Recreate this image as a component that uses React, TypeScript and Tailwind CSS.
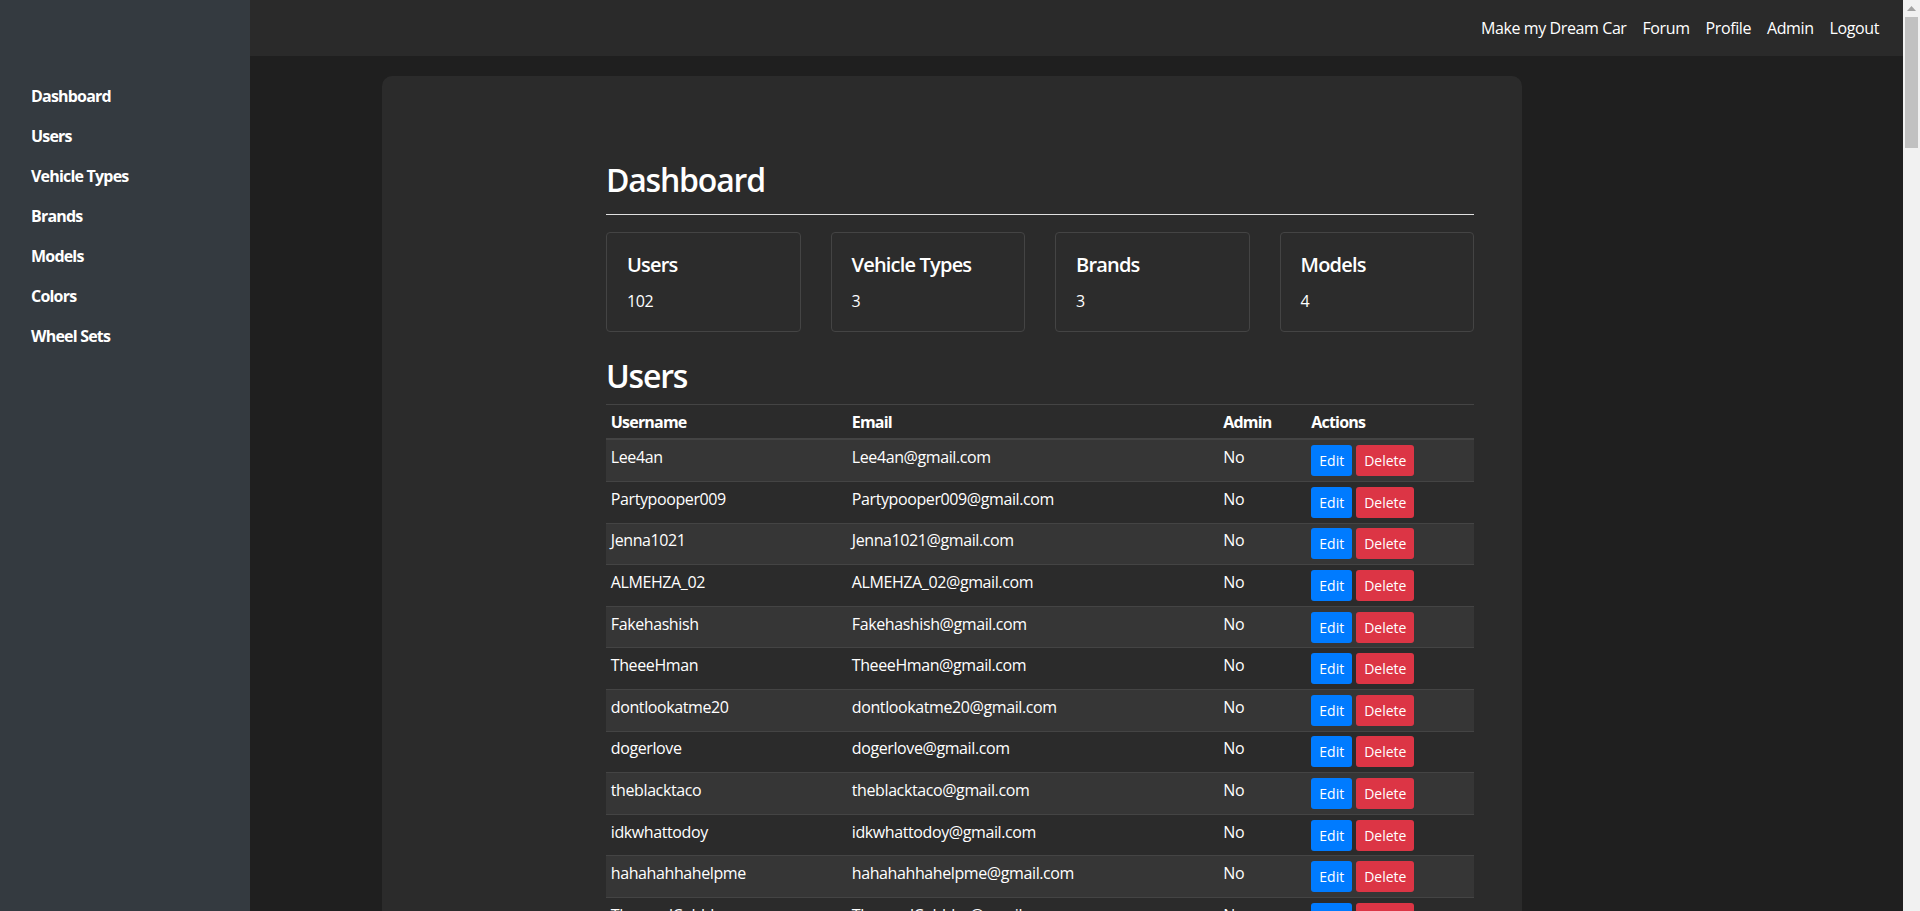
const named = [
    "Lee4an",
    "Partypooper009",
    "Jenna1021",
    "ALMEHZA_02",
    "Fakehashish",
    "TheeeHman",
    "dontlookatme20",
    "dogerlove",
    "theblacktaco",
    "idkwhattodoy",
    "hahahahhahelpme",
    "ThuggedCobbler",
];

const users = [...named, ...Array.from({length: 8}, (_, i) => `driver${i + 13}`)];

const stats = [
    {title: "Users", value: "102"},
    {title: "Vehicle Types", value: "3"},
    {title: "Brands", value: "3"},
    {title: "Models", value: "4"},
];

const sideLinks = ["Dashboard", "Users", "Vehicle Types", "Brands", "Models", "Colors", "Wheel Sets"];
const navLinks = ["Make my Dream Car", "Forum", "Profile", "Admin", "Logout"];

const App = () => {
    return (
        <div className="flex bg-[#1f1f1f] text-white tracking-[-0.4px] font-['Segoe_UI','Open_Sans',sans-serif]">
            <div className="flex flex-1 min-w-0">
                <aside className="sticky top-0 h-screen w-[250px] shrink-0 bg-[#343a40] pt-[76px]">
                    <ul className="flex flex-col">
                        {sideLinks.map((l) => (
                            <li key={l}>
                                <a className="block pl-[31px] py-2 text-base leading-6 font-bold tracking-[-0.8px]">{l}</a>
                            </li>
                        ))}
                    </ul>
                </aside>
                <div className="flex-1 flex flex-col">
                    <nav className="h-14 bg-[#2a2a2a] flex items-center justify-end pr-4">
                        <ul className="flex">
                            {navLinks.map((l) => (
                                <li key={l}>
                                    <a className="block px-2 py-2 text-base leading-6">{l}</a>
                                </li>
                            ))}
                        </ul>
                    </nav>
                    <main className="pt-5 pb-10">
                        <div className="ml-[132px] w-[1140px] rounded-[10px] bg-[#2b2b2b] pt-[85px] pl-[224px] pr-12 pb-12">
                            <h2 className="text-[32px] leading-[1.2] font-semibold tracking-[-1.2px]">Dashboard</h2>
                            <div className="mt-[15px] border-t border-[#e0e0e0]"></div>
                            <div className="mt-[17px] grid grid-cols-4 gap-[30px]">
                                {stats.map((s) => (
                                    <div key={s.title} className="h-[100px] rounded border border-[#444] bg-[#2c2c2c] p-5">
                                        <h5 className="text-xl leading-[1.2] font-semibold tracking-[-0.8px] mb-3">{s.title}</h5>
                                        <p className="text-base leading-6">{s.value}</p>
                                    </div>
                                ))}
                            </div>
                            <h2 className="mt-[25px] mb-2 text-[32px] leading-[1.2] font-semibold tracking-[-1.2px]">Users</h2>
                            <table className="w-full table-fixed border-collapse text-base leading-6">
                                <thead>
                                    <tr className="border-t border-[#444] border-b-2 border-b-[#444] tracking-[-0.8px]">
                                        <th className="w-[241px] p-[4.8px] text-left font-bold">Username</th>
                                        <th className="w-[371.5px] p-[4.8px] text-left font-bold">Email</th>
                                        <th className="w-[88px] p-[4.8px] text-left font-bold">Admin</th>
                                        <th className="p-[4.8px] text-left font-bold">Actions</th>
                                    </tr>
                                </thead>
                                <tbody>
                                    {users.map((u, i) => (
                                        <tr key={u} className={`border-t border-[#444] ${i % 2 === 0 ? "bg-[#363636]" : "bg-[#2b2b2b]"}`}>
                                            <td className="p-[4.8px] align-top">{u}</td>
                                            <td className="p-[4.8px] align-top">{u}@gmail.com</td>
                                            <td className="p-[4.8px] align-top">No</td>
                                            <td className="p-[4.8px] align-top">
                                                <div className="flex gap-1 tracking-normal">
                                                    <button className="h-[31px] rounded-[3px] bg-[#007bff] px-2 text-sm leading-[21px] text-white">Edit</button>
                                                    <button className="h-[31px] rounded-[3px] bg-[#dc3545] px-2 text-sm leading-[21px] text-white">Delete</button>
                                                </div>
                                            </td>
                                        </tr>
                                    ))}
                                </tbody>
                            </table>
                        </div>
                    </main>
                </div>
            </div>
            {/* window scrollbar */}
            <div className="sticky top-0 h-screen w-[17px] shrink-0 bg-[#f1f1f1] flex flex-col">
                <div className="h-[17px] flex items-center justify-center">
                    <svg width="9" height="5" viewBox="0 0 9 5">
                        <path d="M4.5 0 L9 5 L0 5 Z" fill="#a3a3a3"/>
                    </svg>
                </div>
                <div className="mx-[2px] h-[131px] bg-[#c1c1c1]"></div>
            </div>
        </div>
    )
}

export default App;
